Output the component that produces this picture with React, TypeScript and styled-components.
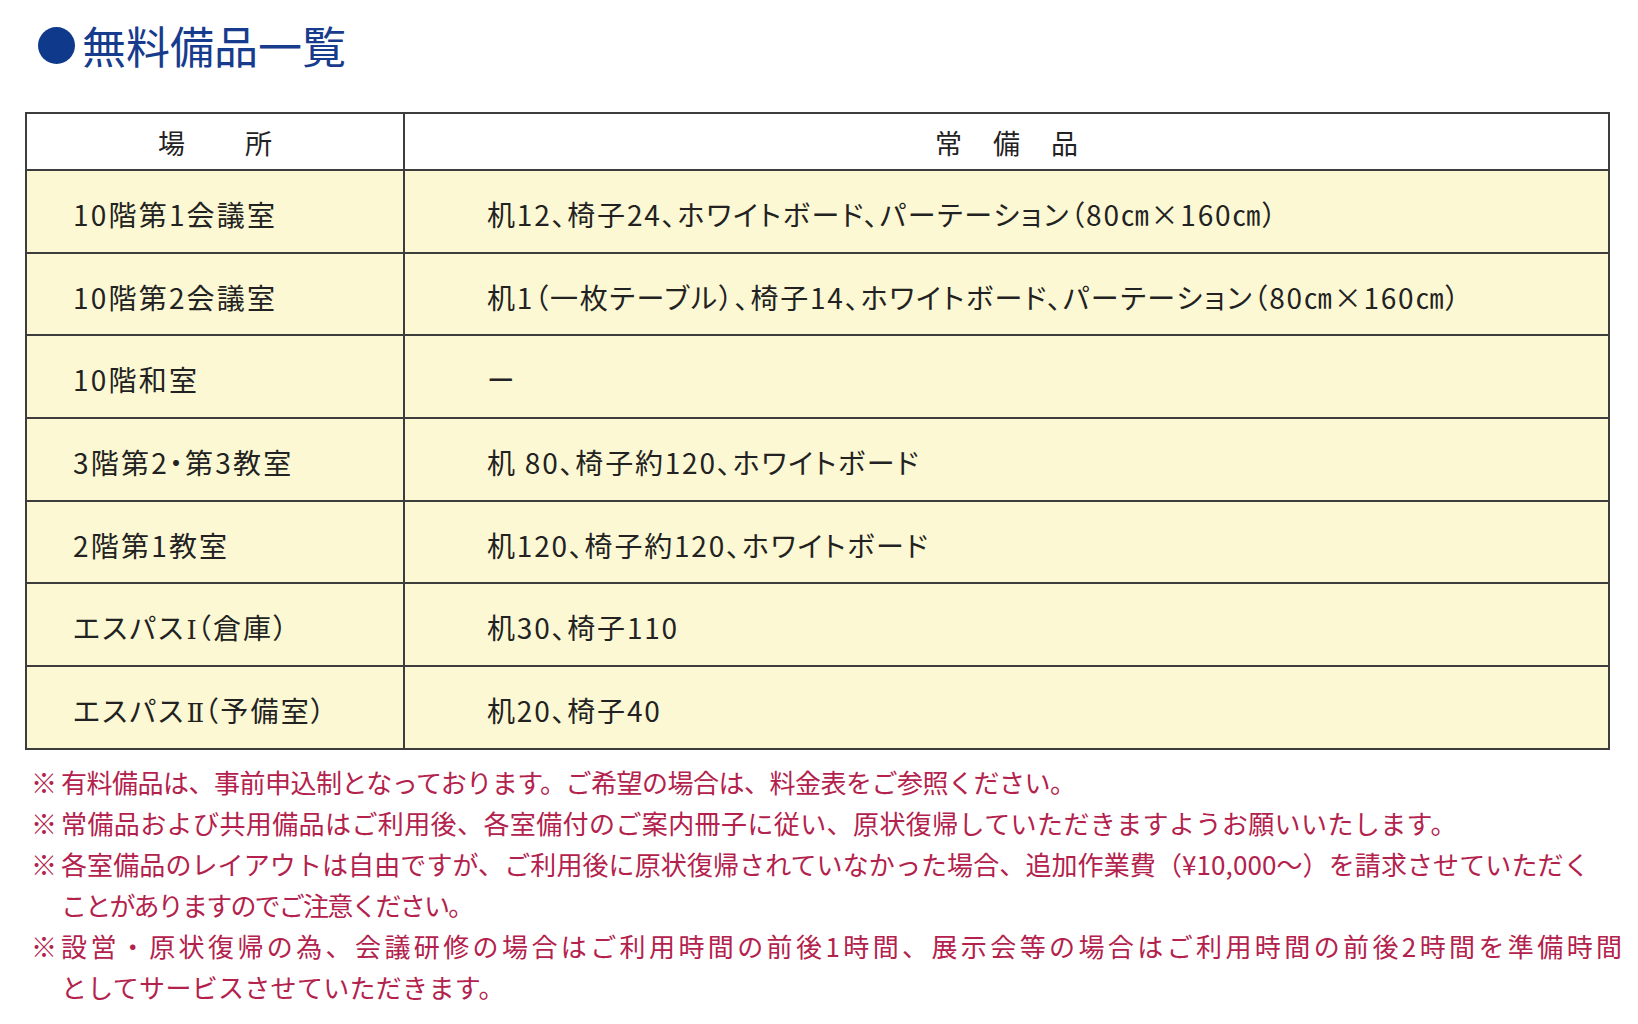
import styled, { createGlobalStyle } from "styled-components";

const GlobalStyle = createGlobalStyle`
  body {
    margin: 0;
    background: #ffffff;
    font-family: "Noto Sans CJK JP", "Noto Sans", sans-serif;
  }
`;

const Page = styled.div`
  padding: 20px 0 0 25px;
  width: 1590px;
`;

const Title = styled.h1`
  display: flex;
  align-items: center;
  gap: 7px;
  margin: 0 0 0 13px;
  height: 50px;
  line-height: 50px;
  font-size: 44px;
  font-weight: 400;
  color: #173b8d;
`;

const Dot = styled.span`
  width: 37px;
  height: 37px;
  border-radius: 50%;
  background: #0f3a8c;
`;

const Table = styled.table`
  margin-top: 42px;
  width: 1585px;
  border-collapse: collapse;
  table-layout: fixed;
  color: #222;
`;

const Col = styled.col<{ $width?: number }>`
  width: ${(p) => (p.$width ? `${p.$width}px` : "auto")};
`;

const HeadRow = styled.tr`
  height: 57px;
  background: #ffffff;
`;

const HeadCell = styled.th<{ $spacing: number }>`
  padding: 2px 0 0 ${(p) => p.$spacing}px;
  border: 2px solid #3d3d3d;
  font-size: 27px;
  font-weight: 400;
  letter-spacing: ${(p) => p.$spacing}px;
  text-align: center;
`;

const Row = styled.tr`
  height: 82.7px;
  background: #fcf8d3;
`;

const Cell = styled.td<{ $indent: number; $spacing: number }>`
  padding: 5px 0 0 ${(p) => p.$indent}px;
  border: 2px solid #3d3d3d;
  font-size: 28px;
  letter-spacing: ${(p) => p.$spacing}px;
  font-feature-settings: "palt";
  white-space: nowrap;
`;

const Numeral = styled.span`
  font-family: "DejaVu Serif", "Liberation Serif", serif;
  font-size: 26px;
  letter-spacing: 0;
  margin-left: 1px;
`;

const Notes = styled.div`
  margin-top: 11px;
  padding-left: 6px;
  color: #b3224c;
  font-size: 26px;
  line-height: 41px;
`;

const Note = styled.div`
  display: flex;
`;

const Mark = styled.span`
  width: 30px;
  flex: none;
`;

const NoteBody = styled.div`
  display: flex;
  flex-direction: column;
`;

const NoteLine = styled.span<{ $spacing: number }>`
  letter-spacing: ${(p) => p.$spacing}px;
  white-space: nowrap;
`;

const rooms: [React.ReactNode, string][] = [
  ["10階第1会議室", "机12、椅子24、ホワイトボード、パーテーション（80㎝×160㎝）"],
  ["10階第2会議室", "机1（一枚テーブル）、椅子14、ホワイトボード、パーテーション（80㎝×160㎝）"],
  ["10階和室", "ー"],
  ["3階第2・第3教室", "机 80、椅子約120、ホワイトボード"],
  ["2階第1教室", "机120、椅子約120、ホワイトボード"],
  [<>エスパス<Numeral>Ⅰ</Numeral>（倉庫）</>, "机30、椅子110"],
  [<>エスパス<Numeral>Ⅱ</Numeral>（予備室）</>, "机20、椅子40"],
];

const notes: [string, number][][] = [
  [["有料備品は、事前申込制となっております。ご希望の場合は、料金表をご参照ください。", -0.5]],
  [["常備品および共用備品はご利用後、各室備付のご案内冊子に従い、原状復帰していただきますようお願いいたします。", 0.4]],
  [
    ["各室備品のレイアウトは自由ですが、ご利用後に原状復帰されていなかった場合、追加作業費（¥10,000～）を請求させていただく", 0.1],
    ["ことがありますのでご注意ください。", -1.8],
  ],
  [
    ["設営・原状復帰の為、会議研修の場合はご利用時間の前後1時間、展示会等の場合はご利用時間の前後2時間を準備時間", 3.4],
    ["としてサービスさせていただきます。", 0.3],
  ],
];

export default function App() {
  return (
    <>
      <GlobalStyle />
      <Page>
        <Title>
          <Dot />
          無料備品一覧
        </Title>
        <Table>
          <colgroup>
            <Col $width={378} />
            <Col />
          </colgroup>
          <thead>
            <HeadRow>
              <HeadCell $spacing={60}>場所</HeadCell>
              <HeadCell $spacing={31}>常備品</HeadCell>
            </HeadRow>
          </thead>
          <tbody>
            {rooms.map(([place, items]) => (
              <Row key={items}>
                <Cell $indent={46} $spacing={2.2}>
                  {place}
                </Cell>
                <Cell $indent={82} $spacing={1.8}>
                  {items}
                </Cell>
              </Row>
            ))}
          </tbody>
        </Table>
        <Notes>
          {notes.map((lines, i) => (
            <Note key={i}>
              <Mark>※</Mark>
              <NoteBody>
                {lines.map(([text, spacing]) => (
                  <NoteLine key={text} $spacing={spacing}>
                    {text}
                  </NoteLine>
                ))}
              </NoteBody>
            </Note>
          ))}
        </Notes>
      </Page>
    </>
  );
}
